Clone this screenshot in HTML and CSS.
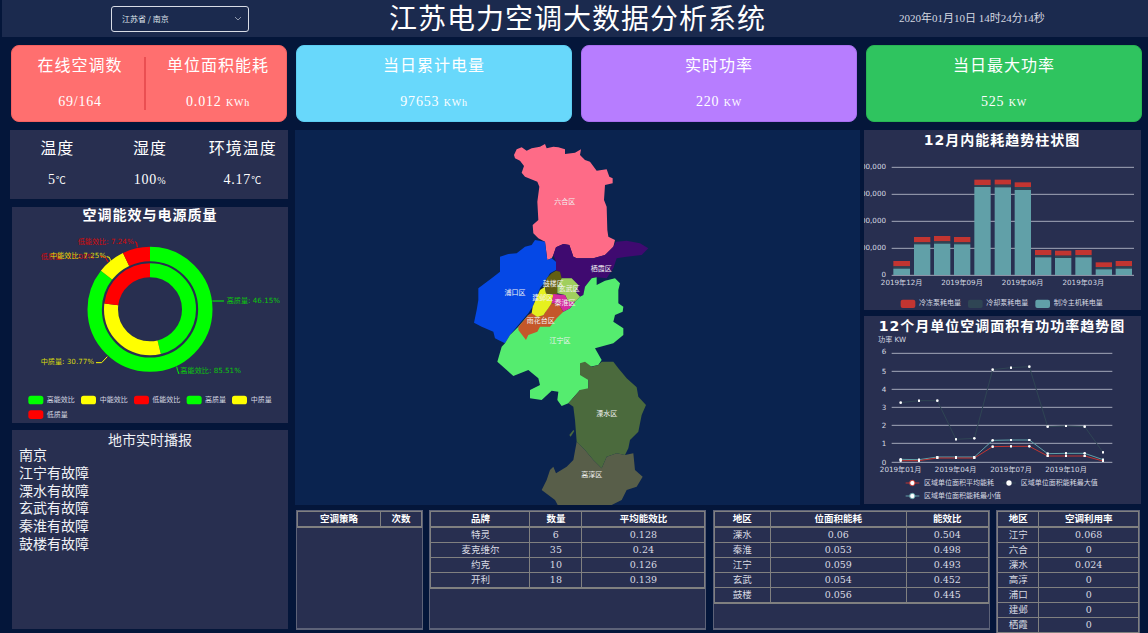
FILE: index.html
```html
<!DOCTYPE html>
<html lang="zh">
<head>
<meta charset="utf-8">
<title>江苏电力空调大数据分析系统</title>
<link rel="stylesheet" href="styles.css">
</head>
<body>
<header class="topbar">
  <div class="select"><span>江苏省 / 南京</span>
    <svg class="chev" viewBox="0 0 8 5" width="8" height="5"><polyline points="1,1 4,4 7,1"/></svg>
  </div>
  <h1 class="title">江苏电力空调大数据分析系统</h1>
  <div class="clock">2020年01月10日 14时24分14秒</div>
</header>

<section class="cards">
  <div class="card red split">
    <div class="cell"><div class="lbl">在线空调数</div><div class="val">69/164</div></div>
    <div class="cell"><div class="lbl">单位面积能耗</div><div class="val">0.012 <small>KWh</small></div></div>
  </div>
  <div class="card blue"><div class="cell"><div class="lbl">当日累计电量</div><div class="val">97653 <small>KWh</small></div></div></div>
  <div class="card purple"><div class="cell"><div class="lbl">实时功率</div><div class="val">220 <small>KW</small></div></div></div>
  <div class="card green"><div class="cell"><div class="lbl">当日最大功率</div><div class="val">525 <small>KW</small></div></div></div>
</section>

<main class="main">
  <div class="leftcol">
    <div class="env">
      <div class="cell"><div class="lbl">温度</div><div class="val">5<small>℃</small></div></div>
      <div class="cell"><div class="lbl">湿度</div><div class="val">100<small>%</small></div></div>
      <div class="cell"><div class="lbl">环境温度</div><div class="val">4.17<small>℃</small></div></div>
    </div>
    <div class="panel donut">
      <svg class="chart" viewBox="36 21 828 648" width="276" height="216">
        <text class="ctitle" x="450" y="60" text-anchor="middle">空调能效与电源质量</text>
        <g transform="rotate(-90 450 328)" fill="none">
          <circle class="ring" cx="450" cy="328" r="166" pathLength="100" stroke="#00ff00" stroke-dasharray="85.51 100"/>
          <circle class="ring" cx="450" cy="328" r="166" pathLength="100" stroke="#ffff00" stroke-dasharray="7.25 100" stroke-dashoffset="-85.51"/>
          <circle class="ring" cx="450" cy="328" r="166" pathLength="100" stroke="#ff0000" stroke-dasharray="7.24 100" stroke-dashoffset="-92.76"/>
          <circle class="ring2" cx="450" cy="328" r="117" pathLength="100" stroke="#00ff00" stroke-dasharray="46.15 100"/>
          <circle class="ring2" cx="450" cy="328" r="117" pathLength="100" stroke="#ffff00" stroke-dasharray="30.77 100" stroke-dashoffset="-46.15"/>
          <circle class="ring2" cx="450" cy="328" r="117" pathLength="100" stroke="#ff0000" stroke-dasharray="23.08 100" stroke-dashoffset="-76.92"/>
        </g>
        <g class="leaders" fill="none">
          <polyline stroke="#ff0000" points="405,125 410,128 412,142"/>
          <polyline stroke="#ffff00" points="320,170 328,172 332,182"/>
          <polyline stroke="#ff0000" points="300,168 316,172 324,186"/>
          <polyline stroke="#00ff00" points="637,303 672,303"/>
          <polyline stroke="#ffff00" points="288,488 305,488 322,470"/>
          <polyline stroke="#00ff00" points="530,500 533,512 537,522"/>
        </g>
        <g class="dlabel">
          <text class="tr" x="233" y="132">低能效比: 7.24%</text>
          <text class="tr" x="122" y="176">低质量: 23.08%</text>
          <text class="ty" x="150" y="175">中能效比: 7.25%</text>
          <text class="tg" x="680" y="309">高质量: 46.15%</text>
          <text class="ty" x="122" y="492">中质量: 30.77%</text>
          <text class="tg" x="541" y="520">高能效比: 85.51%</text>
        </g>
        <g class="legend">
          <rect x="85" y="587" width="45" height="26" rx="8" fill="#00ff00"/><text x="140" y="607">高能效比</text>
          <rect x="243" y="587" width="45" height="26" rx="8" fill="#ffff00"/><text x="299" y="607">中能效比</text>
          <rect x="402" y="587" width="45" height="26" rx="8" fill="#ff0000"/><text x="457" y="607">低能效比</text>
          <rect x="560" y="587" width="45" height="26" rx="8" fill="#00ff00"/><text x="615" y="607">高质量</text>
          <rect x="696" y="587" width="45" height="26" rx="8" fill="#ffff00"/><text x="752" y="607">中质量</text>
          <rect x="85" y="631" width="45" height="26" rx="8" fill="#ff0000"/><text x="140" y="650">低质量</text>
        </g>
      </svg>
    </div>
    <div class="panel news">
      <div class="news-title">地市实时播报</div>
      <ul class="news-list">
        <li>南京</li><li>江宁有故障</li><li>溧水有故障</li><li>玄武有故障</li><li>秦淮有故障</li><li>鼓楼有故障</li>
      </ul>
    </div>
  </div>

  <div class="rightarea">
    <div class="toprow">
      <div class="map">
        <svg class="chart" viewBox="-465 0 1695 1125" width="565" height="375">
          <polygon fill="#fe6b87" points="192,75 200,58 215,52 230,62 245,55 270,50 285,42 290,55 310,50 325,52 345,58 345,72 375,68 393,58 390,75 405,90 420,95 440,122 470,118 478,140 488,145 488,160 465,165 462,210 470,230 472,300 475,320 495,330 490,350 465,375 430,385 380,385 370,380 358,345 340,342 318,352 310,375 305,385 292,390 290,375 285,335 265,325 250,310 248,285 265,270 262,215 268,170 262,155 225,140 215,128 222,108 210,92 195,85"/>
          <polygon fill="#0548e6" points="255,330 285,335 290,375 292,390 305,385 318,395 318,420 300,430 285,455 270,475 248,530 235,550 205,585 180,615 165,640 145,630 135,625 130,605 95,590 72,578 80,540 85,510 85,475 105,460 125,445 150,425 150,380 175,372 200,370 225,350 245,345"/>
          <polygon fill="#3f0a70" points="318,352 340,342 358,345 370,380 380,385 430,385 465,375 490,350 498,335 530,332 570,340 595,355 575,375 530,380 500,385 490,415 470,445 440,442 425,445 405,470 400,495 390,500 378,487 385,465 365,445 335,445 330,425 318,422 318,395 310,375"/>
          <polygon fill="#55ec6f" points="440,442 440,465 465,452 495,445 510,460 505,480 505,520 520,530 518,545 495,555 490,575 520,595 520,615 490,640 435,655 455,690 445,705 420,710 415,750 415,780 390,780 355,820 335,828 322,810 325,785 305,782 275,810 240,805 240,780 270,765 265,745 235,720 190,738 170,720 142,695 155,650 165,640 180,615 205,590 235,555 340,545 360,535 375,515 390,500 400,495 405,470 425,445"/>
          <polygon fill="#c4572a" points="245,548 262,560 280,555 305,520 325,520 340,545 320,565 300,590 270,590 262,605 235,615 228,630 205,600 205,590 235,555"/>
          <polygon fill="#e6f01e" points="285,470 288,490 310,495 305,520 295,535 280,555 262,560 245,550 248,530 270,480"/>
          <polygon fill="#635f12" points="318,422 330,425 335,445 322,470 322,492 310,495 288,490 285,470 290,445 305,430"/>
          <polygon fill="#a0cf5e" points="335,445 365,445 385,465 378,487 390,500 375,515 355,515 345,495 322,490 322,470"/>
          <polygon fill="#d42da0" points="310,492 345,495 355,515 375,515 360,535 340,545 325,520 305,520"/>
          <g transform="translate(60 510)">
            <polygon fill="#585e49" points="320,425 345,450 370,480 395,505 410,470 440,460 465,465 490,460 495,510 518,530 500,560 470,570 455,600 415,620 385,625 340,620 270,628 255,600 215,570 230,540 240,510 250,500 258,520 290,500 310,480"/>
            <polygon fill="#4b6a3d" points="330,190 345,185 365,200 385,195 395,185 430,185 445,205 470,235 500,262 505,290 528,315 515,345 505,395 480,420 475,445 465,465 440,460 410,470 395,505 370,480 345,450 320,425 315,360 310,320 295,310 330,270 355,265 355,240 330,225"/>
            <polygon fill="#4b6a3d" points="298,405 310,390 313,393 302,410"/>
          </g>
          <g class="mlabel" text-anchor="middle">
            <text x="344" y="222">六合区</text>
            <text x="454" y="424">栖霞区</text>
            <text x="195" y="494">浦口区</text>
            <text x="310" y="467">鼓楼区</text>
            <text x="358" y="483">玄武区</text>
            <text x="278" y="510">建邺区</text>
            <text x="345" y="524">秦淮区</text>
            <text x="272" y="579">雨花台区</text>
            <text x="330" y="639">江宁区</text>
            <text x="470" y="859">溧水区</text>
            <text x="425" y="1041">高淳区</text>
          </g>
        </svg>
      </div>
      <div class="charts">
        <div class="panel barp">
          <svg class="chart" viewBox="12 15 831 540" width="277" height="180">
            <text class="ctitle" x="426" y="60" text-anchor="middle">12月内能耗趋势柱状图</text>
            <g class="grid">
              <line x1="95" x2="822" y1="127" y2="127"/><line x1="95" x2="822" y1="208" y2="208"/><line x1="95" x2="822" y1="289" y2="289"/><line x1="95" x2="822" y1="370" y2="370"/><line x1="95" x2="822" y1="451" y2="451"/>
            </g>
            <g class="axis" text-anchor="end">
              <text x="78" y="132">100,000</text><text x="78" y="213">100,000</text><text x="78" y="294">100,000</text><text x="78" y="375">100,000</text><text x="78" y="456">0</text>
            </g>
            <g class="br">
              <rect x="100" y="408" width="50" height="16"/><rect x="162" y="336" width="49" height="16"/><rect x="222" y="333" width="49" height="16"/><rect x="282" y="336" width="49" height="16"/><rect x="343" y="164" width="49" height="16"/><rect x="404" y="164" width="49" height="15"/><rect x="464" y="172" width="49" height="14"/><rect x="525" y="375" width="49" height="15"/><rect x="585" y="377" width="49" height="15"/><rect x="646" y="375" width="49" height="15"/><rect x="707" y="412" width="49" height="14"/><rect x="767" y="408" width="49" height="16"/>
            </g>
            <g class="bd">
              <rect x="100" y="424" width="50" height="7"/><rect x="162" y="352" width="49" height="6"/><rect x="222" y="349" width="49" height="7"/><rect x="282" y="352" width="49" height="6"/><rect x="343" y="180" width="49" height="6"/><rect x="404" y="179" width="49" height="8"/><rect x="464" y="186" width="49" height="9"/><rect x="525" y="390" width="49" height="7"/><rect x="585" y="392" width="49" height="7"/><rect x="646" y="390" width="49" height="7"/><rect x="707" y="426" width="49" height="7"/><rect x="767" y="424" width="49" height="7"/>
            </g>
            <g class="bt">
              <rect x="100" y="431" width="50" height="19"/><rect x="162" y="358" width="49" height="92"/><rect x="222" y="356" width="49" height="94"/><rect x="282" y="358" width="49" height="92"/><rect x="343" y="186" width="49" height="264"/><rect x="404" y="187" width="49" height="263"/><rect x="464" y="195" width="49" height="255"/><rect x="525" y="397" width="49" height="53"/><rect x="585" y="399" width="49" height="51"/><rect x="646" y="397" width="49" height="53"/><rect x="707" y="433" width="49" height="17"/><rect x="767" y="431" width="49" height="19"/>
            </g>
            <g class="axis" text-anchor="middle">
              <text x="125" y="479">2019年12月</text><text x="306" y="479">2019年09月</text><text x="488" y="479">2019年06月</text><text x="670" y="479">2019年03月</text>
            </g>
            <g class="legend">
              <rect x="122" y="524" width="44" height="25" rx="6" fill="#c23531"/><text x="177" y="541">冷冻泵耗电量</text>
              <rect x="324" y="524" width="44" height="25" rx="6" fill="#2f4554"/><text x="379" y="541">冷却泵耗电量</text>
              <rect x="526" y="524" width="44" height="25" rx="6" fill="#61a0a8"/><text x="581" y="541">制冷主机耗电量</text>
            </g>
          </svg>
        </div>
        <div class="panel linep">
          <svg class="chart" viewBox="12 12 831 564" width="277" height="188">
            <defs>
              <marker id="dot" viewBox="0 0 10 10" refX="5" refY="5" markerWidth="8" markerHeight="8" markerUnits="userSpaceOnUse"><circle cx="5" cy="5" r="5" fill="#fff"/></marker>
            </defs>
            <text class="ctitle" x="426" y="57" text-anchor="middle">12个月单位空调面积有功功率趋势图</text>
            <text class="axis" x="54" y="90">功率 KW</text>
            <g class="grid">
              <line x1="95" x2="757" y1="124" y2="124"/><line x1="95" x2="757" y1="178" y2="178"/><line x1="95" x2="757" y1="232" y2="232"/><line x1="95" x2="757" y1="286" y2="286"/><line x1="95" x2="757" y1="340" y2="340"/><line x1="95" x2="757" y1="394" y2="394"/><line x1="95" x2="757" y1="451" y2="451"/>
            </g>
            <g class="axis" text-anchor="middle">
              <text x="72" y="127">6</text><text x="72" y="185">5</text><text x="72" y="239">4</text><text x="72" y="293">3</text><text x="72" y="347">2</text><text x="72" y="401">1</text><text x="72" y="458">0</text>
              <text x="122" y="480">2019年01月</text><text x="287" y="480">2019年04月</text><text x="453" y="480">2019年07月</text><text x="618" y="480">2019年10月</text>
            </g>
            <polyline class="ln ld" points="122,272 177,266 232,266 288,382 343,379 398,173 453,167 508,164 563,344 618,342 674,344 729,421"/>
            <polyline class="ln lt" points="122,442 177,443 232,435 288,435 343,435 398,385 453,384 508,384 563,425 618,424 674,424 729,443"/>
            <polyline class="ln lr" points="122,446 177,446 232,438 288,438 343,438 398,404 453,403 508,403 563,432 618,432 674,432 729,447"/>
            <g class="legend">
              <line class="lr" x1="137" x2="178" y1="513" y2="513"/><circle cx="157" cy="513" r="8" fill="#fff" stroke="#c23531" stroke-width="3"/><text x="192" y="519">区域单位面积平均能耗</text>
              <line class="ld" x1="427" x2="468" y1="513" y2="513"/><circle cx="447" cy="513" r="8" fill="#fff"/><text x="482" y="519">区域单位面积能耗最大值</text>
              <line class="lt" x1="137" x2="178" y1="552" y2="552"/><circle cx="157" cy="552" r="8" fill="#fff" stroke="#61a0a8" stroke-width="3"/><text x="192" y="558">区域单位面积能耗最小值</text>
            </g>
          </svg>
        </div>
      </div>
    </div>
    <div class="tables">
      <div class="tpanel">
        <table>
          <colgroup><col class="c83"><col></colgroup>
          <thead><tr><th>空调策略</th><th>次数</th></tr></thead>
          <tbody></tbody>
        </table>
      </div>
      <div class="tpanel">
        <table>
          <colgroup><col class="c99"><col class="c52"><col></colgroup>
          <thead><tr><th>品牌</th><th>数量</th><th>平均能效比</th></tr></thead>
          <tbody>
            <tr><td>特灵</td><td>6</td><td>0.128</td></tr>
            <tr><td>麦克维尔</td><td>35</td><td>0.24</td></tr>
            <tr><td>约克</td><td>10</td><td>0.126</td></tr>
            <tr><td>开利</td><td>18</td><td>0.139</td></tr>
          </tbody>
        </table>
      </div>
      <div class="tpanel">
        <table>
          <colgroup><col class="c56"><col class="c136"><col></colgroup>
          <thead><tr><th>地区</th><th>位面积能耗</th><th>能效比</th></tr></thead>
          <tbody>
            <tr><td>溧水</td><td>0.06</td><td>0.504</td></tr>
            <tr><td>秦淮</td><td>0.053</td><td>0.498</td></tr>
            <tr><td>江宁</td><td>0.059</td><td>0.493</td></tr>
            <tr><td>玄武</td><td>0.054</td><td>0.452</td></tr>
            <tr><td>鼓楼</td><td>0.056</td><td>0.445</td></tr>
          </tbody>
        </table>
      </div>
      <div class="tpanel tall">
        <table>
          <colgroup><col class="c41"><col></colgroup>
          <thead><tr><th>地区</th><th>空调利用率</th></tr></thead>
          <tbody>
            <tr><td>江宁</td><td>0.068</td></tr>
            <tr><td>六合</td><td>0</td></tr>
            <tr><td>溧水</td><td>0.024</td></tr>
            <tr><td>高淳</td><td>0</td></tr>
            <tr><td>浦口</td><td>0</td></tr>
            <tr><td>建邺</td><td>0</td></tr>
            <tr><td>栖霞</td><td>0</td></tr>
            <tr><td>雨花</td><td>0</td></tr>
          </tbody>
        </table>
      </div>
    </div>
  </div>
</main>
</body>
</html>
```
FILE: styles.css
```css
* { box-sizing: border-box; }
html, body { margin: 0; padding: 0; }
body {
  width: 1148px; height: 633px; overflow: hidden;
  background: #04163a; color: #fff;
  font-family: "Liberation Serif", "Noto Sans CJK SC", serif;
}
.topbar {
  display: flex; align-items: center;
  height: 37px; margin-left: 2px; padding-left: 109px;
  background: #1b2a4e;
}
.select {
  width: 138px; height: 26px;
  display: flex; align-items: center; justify-content: space-between;
  padding: 0 6px 0 10px;
  border: 1px solid #d8dce6; border-radius: 3px;
  font: 8px "Noto Sans CJK SC", sans-serif; color: #dfe3ea;
}
.chev { fill: none; stroke: #8f98ab; stroke-width: 1; }
.title {
  margin: -4px 0 0 140px; width: 409px;
  font: 400 28px/32px "Noto Sans CJK SC", sans-serif; letter-spacing: 1px; white-space: nowrap;
}
.clock { margin: -4px 0 0 101px; font-size: 11px; color: #d5d8e0; white-space: nowrap; }

.cards {
  display: grid; grid-template-columns: repeat(4, 276px); column-gap: 9px;
  margin-top: 8px; padding-left: 11px; height: 77px;
}
.card {
  display: flex; column-gap: 2px; border-radius: 8px; border: 1px solid transparent;
}
.card .cell { flex: 1; text-align: center; padding-top: 6px; }
.cell .lbl { font: 16px/24px "Noto Sans CJK SC", sans-serif; letter-spacing: 1px; }
.cell .val { margin-top: 16px; font-size: 14px; line-height: 20px; letter-spacing: .8px; }
.val small { font-size: 10px; }
.red { background: #ff6f6f; border-color: #f36060; }
.blue { background: #68d8fb; border-color: #5ccdf2; }
.purple { background: #b77dff; border-color: #a86ef0; }
.green { background: #2fc45f; border-color: #28b554; }
.split { position: relative; }
.split::after {
  content: ""; position: absolute; left: 132px; top: 11px; width: 2px; height: 53px;
  background: #ea4f52;
}

.main {
  display: grid; grid-template-columns: 278px 846px; column-gap: 7px;
  margin-top: 8px; padding-left: 10px;
}
.leftcol { display: flex; flex-direction: column; }
.env {
  display: grid; grid-template-columns: repeat(3, 92.7px);
  height: 69px; padding: 5px 0 0 1px; background: #282f50; text-align: center;
}
.env .val { margin-top: 11px; }
.panel { background: #282f50; overflow: hidden; }
.chart { display: block; }
.donut { height: 216px; margin: 8px 0 0 2px; }
.news { height: 199px; margin: 7px 0 0 2px; padding-top: 1px; }
.news-title { font: 14px/17px "Noto Sans CJK SC", sans-serif; text-align: center; color: #eef0f5; }
.news-list {
  list-style: none; margin: -2px 0 0; padding: 0 0 0 7px;
  font: 14px/17.8px "Noto Sans CJK SC", sans-serif; color: #f0f2f6;
}

.ctitle { font: 700 42px "DejaVu Sans", "Noto Sans CJK SC", sans-serif; letter-spacing: 3px; fill: #fff; }
.ring { stroke-width: 43; }
.ring2 { stroke-width: 42; }
.leaders { stroke-width: 3; }
.dlabel { font: 21.5px "DejaVu Sans", "Noto Sans CJK SC", sans-serif; }
.tr { fill: #d40a0a; }
.ty { fill: #d9d90c; }
.tg { fill: #0cc40c; }
.legend { font: 21px "Noto Sans CJK SC", sans-serif; fill: #d6d9e2; }
.grid { stroke: #a3a6b8; stroke-width: 3; }
.axis { font: 21.5px "DejaVu Sans", "Noto Sans CJK SC", sans-serif; fill: #d6d9e2; }
.br { fill: #c23531; }
.bd { fill: #2f4554; }
.bt { fill: #61a0a8; }
.ln { fill: none; marker-start: url(#dot); marker-mid: url(#dot); marker-end: url(#dot); }
.lr { stroke: #c23531; stroke-width: 3; }
.ld { stroke: #2f4554; stroke-width: 3; }
.lt { stroke: #61a0a8; stroke-width: 3; }

.toprow { display: grid; grid-template-columns: 565px 277px; column-gap: 4px; height: 375px; }
.map { background: #0a234f; }
.charts { display: flex; flex-direction: column; row-gap: 6px; }
.barp { height: 180px; }
.linep { height: 188px; }

.tables {
  display: grid; grid-template-columns: 127px 277px 277px 144px; column-gap: 6.4px;
  margin-top: 5px; padding-left: 1px; align-items: start;
}
.tpanel {
  height: 120px; overflow: hidden;
  background: #282f50; border: 1px solid #5d6278; border-bottom-width: 2px;
}
.tall { height: 123px; border-bottom: 0; }
table {
  width: 100%; table-layout: fixed; border-collapse: collapse;
  font: 9.5px/14px "DejaVu Serif", "Noto Sans CJK SC", serif; color: #d8dae2;
}
th, td { height: 15px; padding: 0; border: 1px solid #808080; text-align: center; font-weight: 400; overflow: hidden; white-space: nowrap; }
th { font-weight: 700; color: #fff; border-bottom-width: 2px; }
tbody tr:last-child td { border-bottom-width: 2px; }
.c83 { width: 83px; }
.c99 { width: 99px; }
.c52 { width: 52px; }
.c56 { width: 56px; }
.c136 { width: 136px; }
.c41 { width: 41px; }
.mlabel { font: 21px "Noto Sans CJK SC", sans-serif; fill: #f2f2f2; }
```
